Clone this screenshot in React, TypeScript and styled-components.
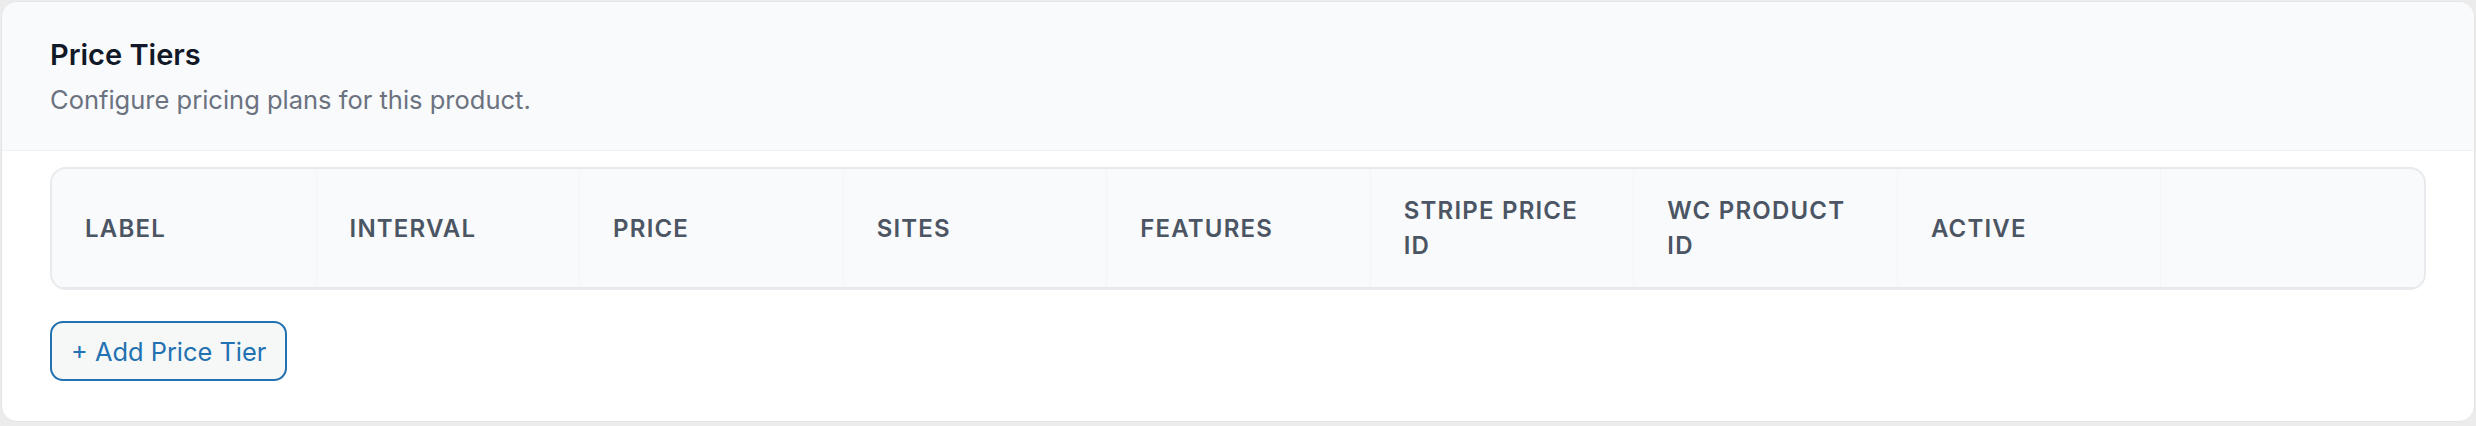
import styled, { createGlobalStyle } from "styled-components";

const GlobalStyle = createGlobalStyle`
  html, body {
    margin: 0;
    padding: 0;
    background: #ececed;
  }
  body {
    font-family: Inter, "Noto Sans", sans-serif;
    -webkit-font-smoothing: antialiased;
  }
`;

const Card = styled.section`
  margin: 1px 1px 3px 1px;
  background: #ffffff;
  border: 1px solid #e3e5e8;
  border-radius: 16px;
  overflow: hidden;
`;

const CardHeader = styled.header`
  background: #f9fafb;
  border-bottom: 1px solid #f0f1f3;
  padding: 36px 48px 32px;
`;

const Title = styled.h2`
  margin: 0;
  font-size: 29px;
  line-height: 34px;
  font-weight: 600;
  color: #111827;
`;

const Subtitle = styled.p`
  margin: 10px 0 0;
  font-size: 25.5px;
  line-height: 36px;
  color: #6b7280;
`;

const CardBody = styled.div`
  padding: 16px 48px 40px;
`;

const TableBox = styled.div`
  border: 2px solid #e8eaed;
  border-radius: 16px;
  overflow: hidden;
  background: #f9fafb;
`;

const HeadRow = styled.div`
  display: grid;
  grid-template-columns: repeat(9, 1fr);
  border-bottom: 1px solid #e5e7eb;
`;

const HeadCell = styled.div<{ $first?: boolean }>`
  display: flex;
  align-items: center;
  min-height: 70px;
  padding: 24px 33px;
  border-left: ${(p) => (p.$first ? "none" : "1px solid #f4f5f6")};
  font-size: 24px;
  line-height: 35px;
  font-weight: 600;
  letter-spacing: 0.05em;
  text-transform: uppercase;
  color: #4b5563;
`;

const AddButton = styled.button`
  margin-top: 31px;
  height: 60px;
  padding: 0 19px;
  border: 2px solid #2271b1;
  border-radius: 13px;
  background: #f6f7f7;
  color: #2271b1;
  font-family: Inter, "Noto Sans", sans-serif;
  font-size: 25.4px;
  cursor: pointer;
`;

const columns = [
  "Label",
  "Interval",
  "Price",
  "Sites",
  "Features",
  "Stripe Price ID",
  "WC Product ID",
  "Active",
  "",
];

export default function App() {
  return (
    <>
      <GlobalStyle />
      <Card>
        <CardHeader>
          <Title>Price Tiers</Title>
          <Subtitle>Configure pricing plans for this product.</Subtitle>
        </CardHeader>
        <CardBody>
          <TableBox>
            <HeadRow>
              {columns.map((c, i) => (
                <HeadCell key={i} $first={i === 0}>
                  {c}
                </HeadCell>
              ))}
            </HeadRow>
          </TableBox>
          <AddButton type="button">+ Add Price Tier</AddButton>
        </CardBody>
      </Card>
    </>
  );
}
